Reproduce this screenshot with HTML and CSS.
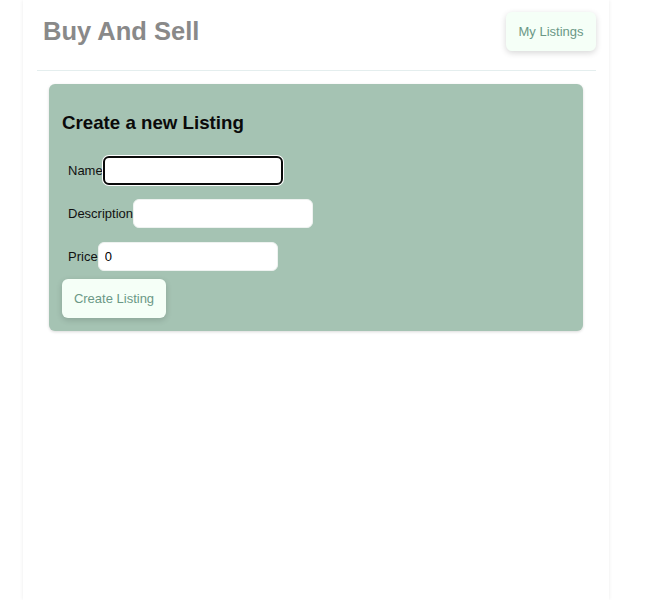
FILE: index.html
```html
<!DOCTYPE html>
<html>
<head>
<meta charset="utf-8">
<link rel="stylesheet" href="styles.css">
</head>
<body>
<div class="app">
  <header class="topbar">
    <h1 class="brand">Buy And Sell</h1>
    <button class="btn nav-btn">My Listings</button>
  </header>
  <hr class="divider">
  <section class="card">
    <h3 class="card-title">Create a new Listing</h3>
    <form class="form">
      <div class="row"><label class="label">Name</label><input class="field focused" type="text"></div>
      <div class="row"><label class="label">Description</label><input class="field" type="text"></div>
      <div class="row"><label class="label">Price</label><input class="field" type="number" value="0"></div>
      <div class="actions"><button type="button" class="btn create-btn">Create Listing</button></div>
    </form>
  </section>
</div>
</body>
</html>
```
FILE: styles.css
```css
html, body {
  margin: 0;
  padding: 0;
  background: #ffffff;
  font-family: "Liberation Sans", Arial, sans-serif;
}
.app {
  width: 586px;
  margin-left: 23px;
  min-height: 600px;
  background: #fff;
  box-shadow: 0 0 4px rgba(0, 0, 0, 0.08);
  box-sizing: border-box;
  overflow: hidden;
}
.topbar {
  display: flex;
  justify-content: space-between;
  align-items: center;
  padding: 12px 13px 0 20px;
  height: 51px;
  box-sizing: border-box;
}
.brand {
  margin: 0;
  font-size: 25.5px;
  font-weight: bold;
  color: #898989;
  line-height: 30px;
  padding-bottom: 1px;
}
.btn {
  border: none;
  border-radius: 6px;
  background: #f5fff7;
  color: #6b9886;
  font-family: "Liberation Sans", Arial, sans-serif;
  font-size: 13px;
  box-shadow: 0 2px 6px rgba(0, 0, 0, 0.16);
  cursor: pointer;
}
.nav-btn {
  width: 90px;
  height: 39px;
  padding: 0;
}
.divider {
  border: none;
  border-top: 1px solid #e4eeee;
  margin: 19px 13px 0 14px;
  height: 0;
}
.card {
  margin: 13px 26px 0 26px;
  background: #a5c3b3;
  border-radius: 6px;
  box-shadow: 0 1px 3px rgba(0, 0, 0, 0.15);
  padding: 10px 13px 13px 13px;
}
.card-title {
  margin: 18px 0 0 0;
  font-size: 18.72px;
  font-weight: bold;
  color: #0a0a0a;
}
.form {
  display: flex;
  flex-direction: column;
  margin-top: 22px;
}
.row {
  display: flex;
  align-items: center;
  padding-left: 6px;
  margin-bottom: 14px;
}
.label {
  font-size: 13px;
  color: #111;
}
.field {
  width: 180px;
  height: 29px;
  box-sizing: border-box;
  border: 1px solid #eef2f0;
  border-radius: 6px;
  background: #fff;
  padding: 0 6px;
  font-family: "Liberation Sans", Arial, sans-serif;
  font-size: 13px;
  color: #000;
  outline: none;
}
.field.focused {
  border: 2px solid #0a0a0a;
  box-shadow: 0 0 0 1px #ffffff;
}
.field[type=number]::-webkit-inner-spin-button,
.field[type=number]::-webkit-outer-spin-button {
  -webkit-appearance: none;
  margin: 0;
}
.actions {
  margin-top: -6px;
}
.create-btn {
  width: 104px;
  height: 39px;
  padding: 0;
}
```
